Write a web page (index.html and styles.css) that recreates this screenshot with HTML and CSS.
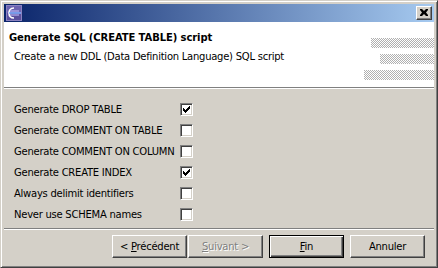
FILE: index.html
```html
<!DOCTYPE html>
<html lang="en">
<head>
    <meta charset="UTF-8">
    <title>Generate SQL (CREATE TABLE) script</title>
    <link rel="stylesheet" href="styles.css">
</head>
<body>

    <div class="window">
        <!-- Barre de titre -->
        <div class="titlebar">
            <svg class="app-icon" width="16" height="16" viewBox="0 0 16 16">
                <rect x="0.5" y="0.5" width="15" height="15" fill="#5a4f9c" stroke="#8a82c0"/>
                <rect x="1" y="1" width="14" height="7" fill="#6d63b0"/>
                <path d="M8 3 C4 3 3 6 3 8 C3 10 4 13 8 13" fill="none" stroke="#fff" stroke-width="1.6"/>
                <line x1="3" y1="8" x2="15" y2="8" stroke="#7fb0ff" stroke-width="1.5"/>
                <line x1="4" y1="6" x2="13" y2="6" stroke="#c8c4ff" stroke-width="1"/>
                <line x1="4" y1="10" x2="13" y2="10" stroke="#c8c4ff" stroke-width="1"/>
            </svg>
            <span class="close-btn">
                <svg width="8" height="7" viewBox="0 0 8 7">
                    <path d="M0 0h2l2 2 2-2h2v1L6 3.5 8 6v1H6L4 5 2 7H0V6l2-2.5L0 1z" fill="#000"/>
                </svg>
            </span>
        </div>

        <!-- Zone d'en-tête de l'assistant -->
        <div class="banner">
            <div class="banner-text">
                <h1>Generate SQL (CREATE TABLE) script</h1>
                <p>Create a new DDL (Data Definition Language) SQL script</p>
            </div>
            <div class="banner-art">
                <span class="hatch hatch-1"></span>
                <span class="hatch hatch-2"></span>
                <span class="hatch hatch-3"></span>
            </div>
        </div>

        <!-- Options -->
        <div class="options">
            <span class="option-label">Generate DROP TABLE</span>
            <span class="check checked"></span>
            <span class="option-label">Generate COMMENT ON TABLE</span>
            <span class="check"></span>
            <span class="option-label">Generate COMMENT ON COLUMN</span>
            <span class="check"></span>
            <span class="option-label">Generate CREATE INDEX</span>
            <span class="check checked"></span>
            <span class="option-label">Always delimit identifiers</span>
            <span class="check"></span>
            <span class="option-label">Never use SCHEMA names</span>
            <span class="check"></span>
        </div>

        <div class="separator"></div>

        <!-- Boutons -->
        <div class="buttons">
            <span class="btn"><span>&lt; <u>P</u>récédent</span></span>
            <span class="btn disabled"><span><u>S</u>uivant &gt;</span></span>
            <span class="btn default"><span><u>F</u>in</span></span>
            <span class="btn"><span>Annuler</span></span>
        </div>
    </div>

</body>
</html>
```

FILE: styles.css
```css
/* Fenêtre style Windows classique */
body {
    margin: 0;
    background-color: #d4d0c8;
    font-family: "DejaVu Sans", sans-serif;
    font-size: 10px;
    letter-spacing: -0.25px;
    color: #000;
}

.window {
    width: 438px;
    height: 268px;
    box-sizing: border-box;
    background-color: #d4d0c8;
    border: 1px solid;
    border-color: #d4d0c8 #404040 #404040 #d4d0c8;
    box-shadow: inset 1px 1px #fff, inset -1px -1px #808080;
    padding: 3px;
    display: flex;
    flex-direction: column;
}

.titlebar {
    height: 18px;
    flex-shrink: 0;
    background: linear-gradient(to right, #0a246a, #a6caf0);
    display: flex;
    align-items: center;
    justify-content: space-between;
    padding: 0 2px;
}

.app-icon {
    display: block;
}

.close-btn {
    width: 16px;
    height: 14px;
    box-sizing: border-box;
    background-color: #d4d0c8;
    border: 1px solid;
    border-color: #fff #404040 #404040 #fff;
    box-shadow: inset -1px -1px #808080;
    display: flex;
    align-items: center;
    justify-content: center;
}

.close-btn svg {
    display: block;
    margin: 0 1px 1px 0;
}

/* En-tête blanc */
.banner {
    height: 65px;
    flex-shrink: 0;
    background-color: #fff;
    border-bottom: 1px solid #808080;
    display: flex;
    justify-content: space-between;
}

.banner-text {
    white-space: nowrap;
}

.banner-text h1 {
    font-size: 10px;
    font-weight: bold;
    letter-spacing: -0.1px;
    margin: 10px 0 0 5px;
}

.banner-text p {
    margin: 8px 0 0 10px;
}

.banner-art {
    display: flex;
    flex-direction: column;
    align-items: flex-end;
    gap: 6px;
    padding-top: 16px;
}

.hatch {
    display: block;
    height: 10px;
    background: url("data:image/svg+xml,%3Csvg xmlns='http://www.w3.org/2000/svg' width='2' height='2'%3E%3Crect width='1' height='1' fill='%23b0b0b0'/%3E%3Crect x='1' y='1' width='1' height='1' fill='%23b0b0b0'/%3E%3C/svg%3E") 0 0 / 2px 2px;
}

.hatch-1 { width: 63px; }
.hatch-2 { width: 54px; }
.hatch-3 { width: 70px; }

/* Liste des options */
.options {
    border-top: 1px solid #fff;
    display: grid;
    grid-template-columns: 166px 13px;
    grid-auto-rows: 21px;
    align-items: center;
    padding: 10px 0 0 10px;
    white-space: nowrap;
}

.check {
    width: 13px;
    height: 13px;
    box-sizing: border-box;
    background-color: #fff;
    border: 1px solid;
    border-color: #808080 #fff #fff #808080;
    box-shadow: inset 1px 1px #404040, inset -1px -1px #d4d0c8;
    position: relative;
}

.check.checked::after {
    content: "";
    position: absolute;
    left: 2px;
    top: 2px;
    width: 7px;
    height: 7px;
    background: no-repeat center / 7px 7px url("data:image/svg+xml,%3Csvg xmlns='http://www.w3.org/2000/svg' width='7' height='7'%3E%3Cpath d='M0 2h1v1h1v1h1V3h1V2h1V1h1V0h1v3H6v1H5v1H4v1H3v1H2V6H1V5H0z' fill='%23000'/%3E%3C/svg%3E");
}

.separator {
    margin-top: auto;
    height: 1px;
    background-color: #808080;
    border-bottom: 1px solid #fff;
}

/* Boutons */
.buttons {
    display: flex;
    justify-content: flex-end;
    padding: 5px 9px 6px 0;
}

.btn {
    width: 75px;
    height: 23px;
    box-sizing: border-box;
    border: 1px solid;
    border-color: #fff #404040 #404040 #fff;
    box-shadow: inset -1px -1px #808080;
    display: flex;
    align-items: center;
    justify-content: center;
    margin-left: 6px;
    white-space: nowrap;
}

.btn.disabled {
    margin-left: 1px;
    color: #808080;
    text-shadow: 1px 1px #fff;
}

.btn.default {
    border-color: #000;
    box-shadow: inset 1px 1px #fff, inset -1px -1px #404040, inset -2px -2px #808080;
}
```
